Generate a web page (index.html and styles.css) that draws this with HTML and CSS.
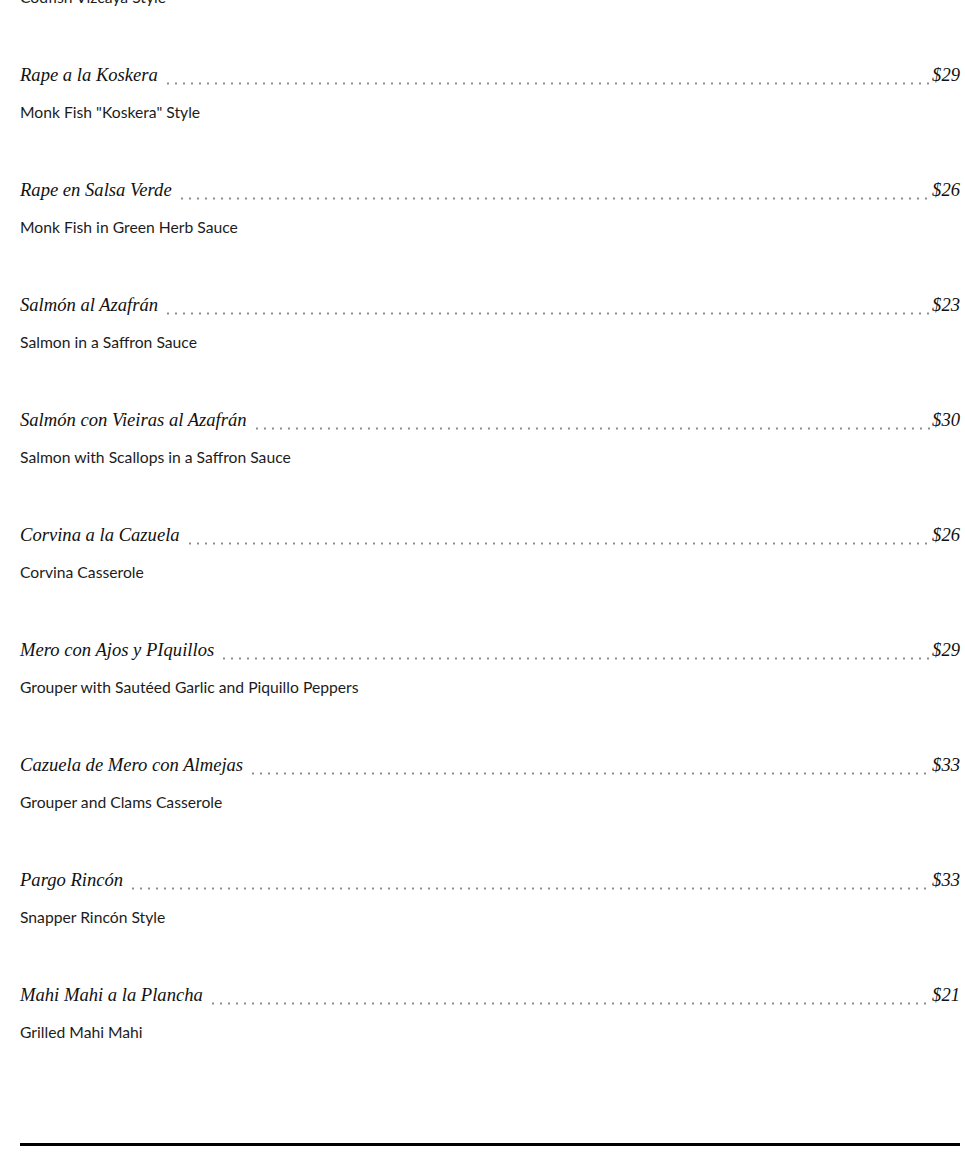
FILE: index.html
```html
<!DOCTYPE html>
<html lang="es">
<head>
<meta charset="utf-8">
<title>Menu</title>
<link rel="stylesheet" href="styles.css">
</head>
<body>
<main class="menu">
  <ul class="items">
    <li class="item">
      <div class="head"><span class="name">Bacalao a la Vizcaína</span><span class="leader"></span><span class="price">$27</span></div>
      <p class="desc">Codfish Vizcaya Style</p>
    </li>
    <li class="item">
      <div class="head"><span class="name">Rape a la Koskera</span><span class="leader"></span><span class="price">$29</span></div>
      <p class="desc">Monk Fish "Koskera" Style</p>
    </li>
    <li class="item">
      <div class="head"><span class="name">Rape en Salsa Verde</span><span class="leader"></span><span class="price">$26</span></div>
      <p class="desc">Monk Fish in Green Herb Sauce</p>
    </li>
    <li class="item">
      <div class="head"><span class="name">Salmón al Azafrán</span><span class="leader"></span><span class="price">$23</span></div>
      <p class="desc">Salmon in a Saffron Sauce</p>
    </li>
    <li class="item">
      <div class="head"><span class="name">Salmón con Vieiras al Azafrán</span><span class="leader"></span><span class="price">$30</span></div>
      <p class="desc">Salmon with Scallops in a Saffron Sauce</p>
    </li>
    <li class="item">
      <div class="head"><span class="name">Corvina a la Cazuela</span><span class="leader"></span><span class="price">$26</span></div>
      <p class="desc">Corvina Casserole</p>
    </li>
    <li class="item">
      <div class="head"><span class="name">Mero con Ajos y PIquillos</span><span class="leader"></span><span class="price">$29</span></div>
      <p class="desc">Grouper with Sautéed Garlic and Piquillo Peppers</p>
    </li>
    <li class="item">
      <div class="head"><span class="name">Cazuela de Mero con Almejas</span><span class="leader"></span><span class="price">$33</span></div>
      <p class="desc">Grouper and Clams Casserole</p>
    </li>
    <li class="item">
      <div class="head"><span class="name">Pargo Rincón</span><span class="leader"></span><span class="price">$33</span></div>
      <p class="desc">Snapper Rincón Style</p>
    </li>
    <li class="item">
      <div class="head"><span class="name">Mahi Mahi a la Plancha</span><span class="leader"></span><span class="price">$21</span></div>
      <p class="desc">Grilled Mahi Mahi</p>
    </li>
  </ul>
  <hr class="rule">
</main>
</body>
</html>
```
FILE: styles.css
```css
html, body {
  margin: 0;
  padding: 0;
  background: #fff;
}
.menu {
  padding: 0 5px 0 20px;
  margin-top: -55px;
}
.items {
  list-style: none;
  margin: 0;
  padding: 0;
}
.item {
  margin: 0 0 52px 0;
}
.head {
  display: flex;
  align-items: baseline;
  height: 30px;
  line-height: 30px;
  font-family: "Liberation Serif", "DejaVu Serif", serif;
  font-style: italic;
  font-size: 18.6px;
  color: #111;
}
.name {
  white-space: nowrap;
}
.leader {
  flex: 1;
  height: 3px;
  margin: 0 2px 5px 6px;
  background-image: radial-gradient(circle, #8a8a8a 0.9px, transparent 1.3px);
  background-size: 8px 3px;
  background-repeat: repeat-x;
  background-position: left center;
  align-self: flex-end;
}
.price {
  white-space: nowrap;
}
.desc {
  margin: 11px 0 0 0;
  font-family: "Lato", "Open Sans", sans-serif;
  font-size: 15.7px;
  line-height: 22px;
  color: #1c1c1c;
}
.rule {
  margin: 100px 0 0 0;
  border: 0;
  height: 3px;
  background: #000;
}
```
